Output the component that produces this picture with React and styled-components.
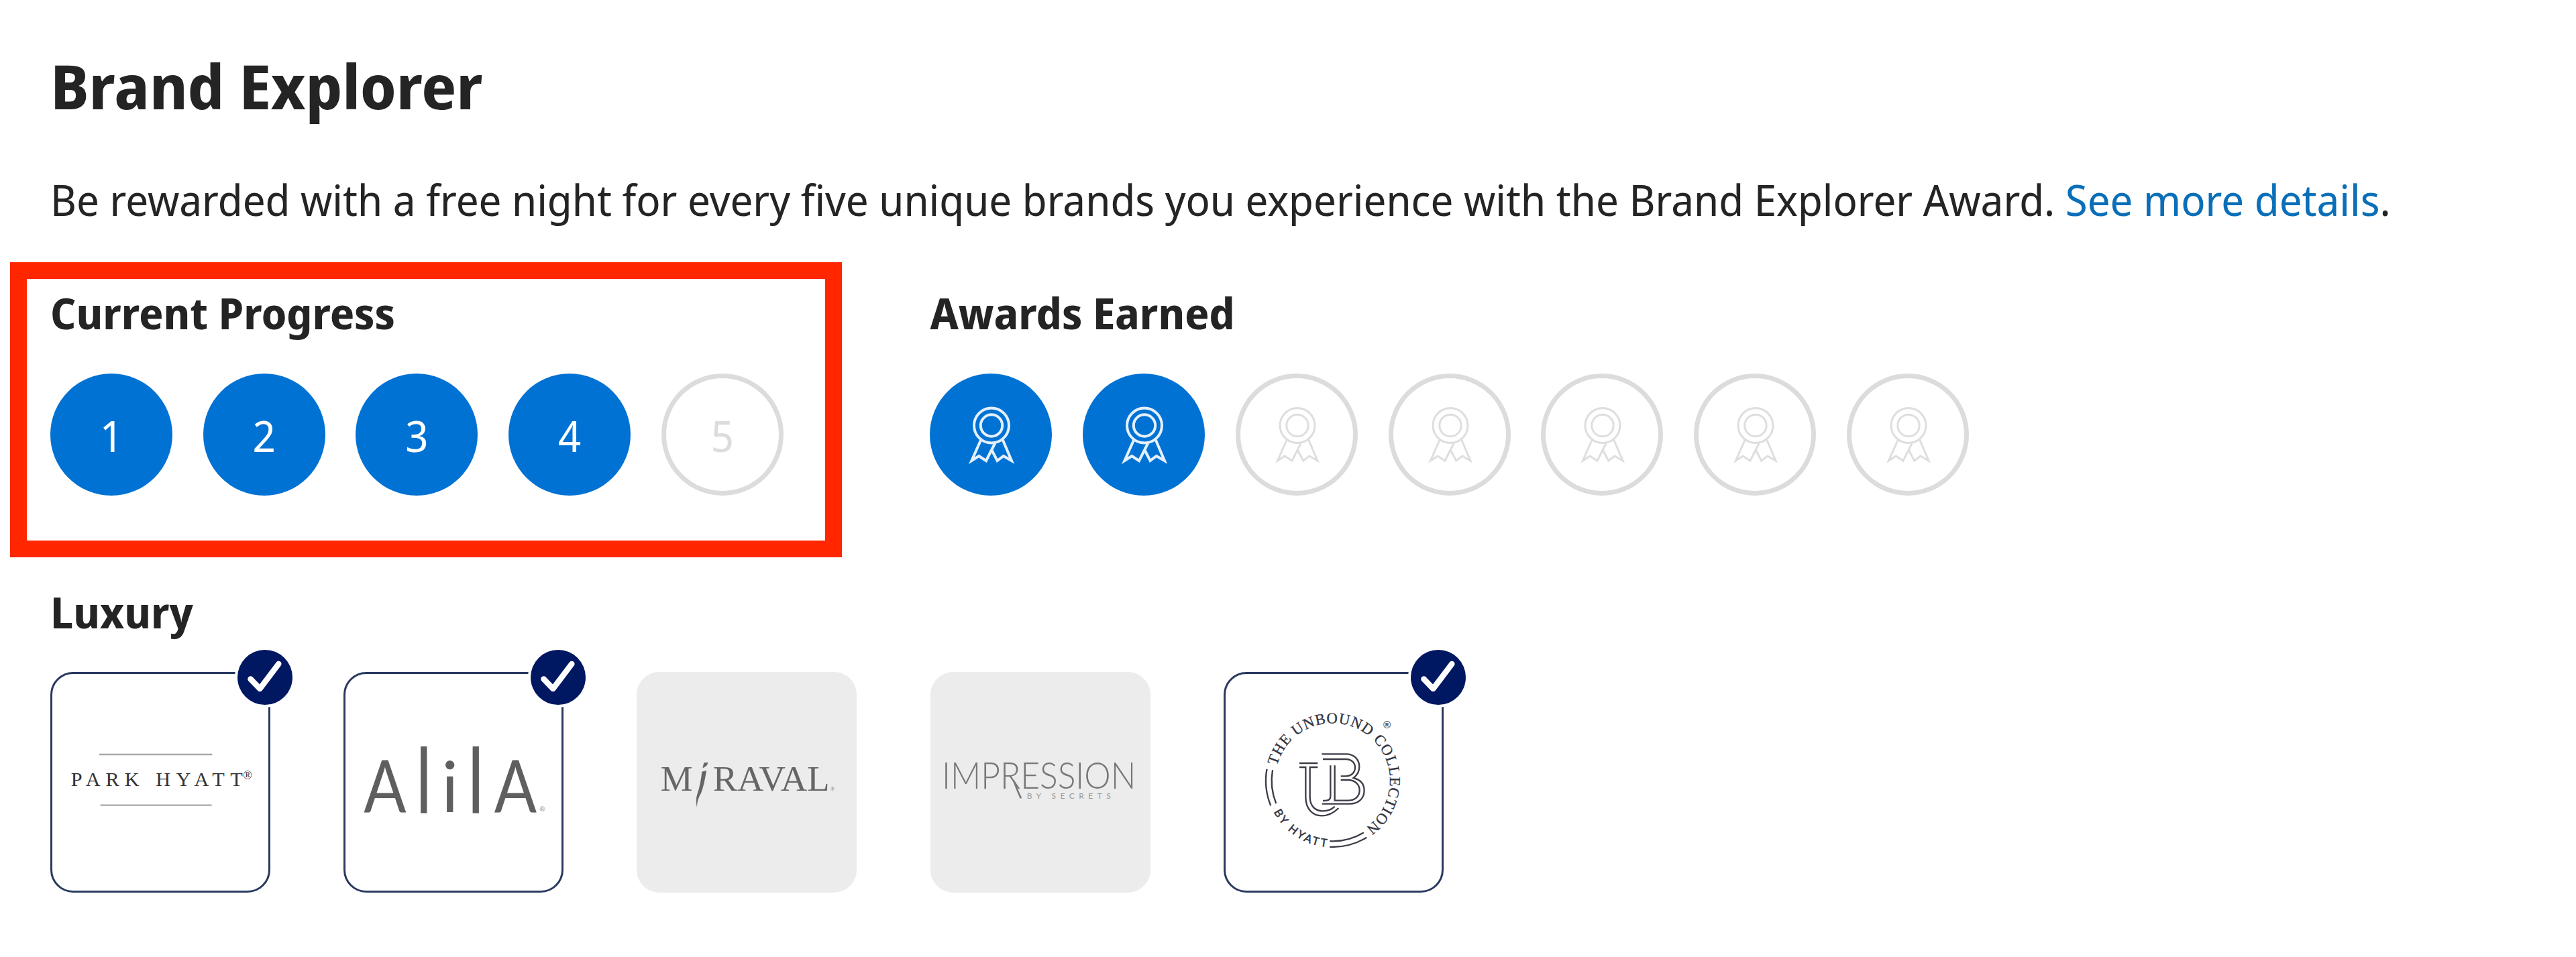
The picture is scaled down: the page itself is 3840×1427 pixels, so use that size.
import React from "react";
import styled, { createGlobalStyle, css } from "styled-components";

const Global = createGlobalStyle`
  *, *::before, *::after { box-sizing: border-box; }
  body { margin: 0; background: #fff; color: #242424; font-family: "Noto Sans Display", "Noto Sans", sans-serif; }
`;

const Page = styled.main`
  width: 3840px;
  height: 1427px;
  padding: 66px 75px 0;
  overflow: hidden;
`;

const Title = styled.h1`
  margin: 0;
  font-size: 91px;
  line-height: 124px;
  font-weight: 700;
`;

const Intro = styled.p`
  margin: 64px 0 0;
  font-size: 63.73px;
  line-height: 88px;
  white-space: nowrap;
`;

const DetailsLink = styled.a`
  color: #0a6fb8;
  text-decoration: none;
`;

const Summary = styled.div`
  display: flex;
  gap: 218.7px;
  margin-top: 80px;
`;

const Panel = styled.section`
  position: relative;
`;

const Highlight = styled.div`
  position: absolute;
  top: -31px;
  left: -60px;
  width: 1240px;
  height: 440px;
  border: 25px solid #ff2600;
  pointer-events: none;
`;

const Heading = styled.h2`
  margin: 0;
  padding-top: 1px;
  font-size: 63.7px;
  line-height: 88px;
  font-weight: 700;
`;

const Steps = styled.div`
  display: flex;
  gap: 45.7px;
  margin-top: 46px;
`;

const Step = styled.div`
  display: flex;
  align-items: center;
  justify-content: center;
  width: 182px;
  height: 182px;
  border-radius: 50%;
  font-size: 63.7px;
  line-height: 88px;
  ${({ $done }) =>
    $done
      ? css`
          background: #0072d3;
          color: #fff;
        `
      : css`
          border: 7px solid #dcdcdc;
          color: #dcdcdc;
        `}
`;

const StepNumber = styled.span`
  padding-top: 3px;
`;

const Brands = styled.section`
  margin-top: 129px;
`;

const Grid = styled.div`
  display: grid;
  grid-template-columns: repeat(5, 328px);
  column-gap: 109.2px;
  margin-top: 45px;
`;

const Card = styled.div`
  position: relative;
  height: 329px;
  border: 3px solid ${({ $earned }) => ($earned ? "#2a3a60" : "#ececec")};
  border-radius: 34px;
  background: ${({ $earned }) => ($earned ? "#fff" : "#ececec")};
`;

const Logo = styled.svg`
  display: block;
  width: 328px;
  height: 329px;
  margin: -3px;
  overflow: visible;
`;

const Badge = styled.div`
  position: absolute;
  top: -40px;
  right: -40px;
  display: flex;
  width: 90px;
  height: 90px;
  padding: 4px;
  border-radius: 50%;
  background: #fff;
`;

const Ribbon = styled.svg`
  flex: none;
  width: 182px;
  height: 182px;
  fill: none;
  stroke: ${({ $done }) => ($done ? "#e4f0fc" : "#dedede")};
  stroke-width: ${({ $done }) => ($done ? 4 : 3)};
`;

const RibbonIcon = ({ done }) => (
  <Ribbon $done={done} viewBox="0 0 182 182">
    <circle cx="92" cy="77.5" r="26" />
    <circle cx="92" cy="77.5" r="16.2" />
    <path d="M76.4 98.5L62.4 130L73.2 123L84 130L97.2 104" />
    <path d="M108.6 98.5L122 130L109.8 123L100.6 130L92.6 114.5" />
  </Ribbon>
);

const CheckBadge = () => (
  <Badge>
    <svg width="82" height="82" viewBox="-41 -41 82 82">
      <circle r="41" fill="#001762" />
      <path d="M-21.5 2.5L-7.6 17L20.3 -20" fill="none" stroke="#fff" strokeWidth="8.6" strokeLinecap="round" strokeLinejoin="round" />
    </svg>
  </Badge>
);

const ParkHyattLogo = () => (
  <Logo viewBox="106 427 984 987" fontFamily="'Liberation Serif', serif" fill="#333">
    <path d="M325 796H830M330 1023H828" stroke="#a8a8a8" strokeWidth="7" />
    <text x="198" y="936" fontSize="91" textLength="306">PARK</text>
    <text x="578" y="936" fontSize="91" textLength="388">HYATT</text>
    <text x="968" y="908" fontSize="54">®</text>
  </Logo>
);

const AlilaLogo = () => (
  <Logo viewBox="101 186 984 987" fontFamily="Lato, sans-serif" fill="#5f5f5f" textAnchor="middle">
    <text x="287" y="812" fontSize="328" textLength="190" lengthAdjust="spacingAndGlyphs">A</text>
    <text x="460" y="812" fontSize="394" fontWeight="300" stroke="#5f5f5f" strokeWidth="9">l</text>
    <text x="577" y="812" fontSize="312">i</text>
    <text x="693" y="812" fontSize="394" fontWeight="300" stroke="#5f5f5f" strokeWidth="9">l</text>
    <text x="870" y="812" fontSize="328" textLength="190" lengthAdjust="spacingAndGlyphs">A</text>
    <text x="990" y="810" fontSize="30" fill="#8a8a8a">®</text>
  </Logo>
);

const MiravalLogo = () => (
  <Logo viewBox="85 68 984 987" fontFamily="'Liberation Serif', serif" fill="#666">
    <text x="192" y="598" fontSize="161">M</text>
    <path d="M386 474L404 473Q402 490 380 498ZM377 514L397 509Q388 570 374 608Q354 640 355 674Q347 640 357 612Q372 566 377 514Z" />
    <text x="426" y="598" fontSize="161" textLength="522" lengthAdjust="spacingAndGlyphs">RAVAL</text>
    <text x="952" y="600" fontSize="24">®</text>
  </Logo>
);

const ImpressionLogo = () => (
  <Logo viewBox="79 68 984 987" fontFamily="Lato, sans-serif" fontWeight="300" fill="#777">
    <text x="130" y="590" fontSize="166" textLength="868" lengthAdjust="spacingAndGlyphs">IMPRESSION</text>
    <path d="M452 555Q468 600 484 633" fill="none" stroke="#777" strokeWidth="8" />
    <text x="510" y="636" fontSize="36" textLength="375" fontWeight="400" fill="#999">BY SECRETS</text>
  </Logo>
);

const arcPath = (radius, from, to, sweep) => {
  const at = (deg) => {
    const a = (deg * Math.PI) / 180;
    return `${588 + radius * Math.cos(a)} ${672 + radius * Math.sin(a)}`;
  };
  const span = sweep ? (to - from + 360) % 360 : (from - to + 360) % 360;
  return `M${at(from)}A${radius} ${radius} 0 ${span > 180 ? 1 : 0} ${sweep} ${at(to)}`;
};

const UnboundLogo = () => (
  <Logo viewBox="101 186 984 987" fill="#33333f">
    <defs>
      <path id="unbound-ring-top" d={arcPath(257, 195, 70, 1)} />
      <path id="unbound-ring-bottom" d={arcPath(298, 152, 80, 0)} />
    </defs>
    <text fontFamily="'Liberation Serif', serif" fontSize="68" textLength="985" stroke="#33333f" strokeWidth="1">
      <textPath href="#unbound-ring-top" textLength="985">THE UNBOUND COLLECTION</textPath>
    </text>
    <text fontFamily="Lato, sans-serif" fontSize="50" textLength="296" stroke="#33333f" strokeWidth="1.5">
      <textPath href="#unbound-ring-bottom" textLength="296">BY HYATT</textPath>
    </text>
    <text x="815" y="438" fontFamily="'Liberation Sans', sans-serif" fontWeight="700" fontSize="46" fill="#555">®</text>
    <g fill="none" stroke="#3c3c48" strokeWidth="7">
      <path d={arcPath(298, 190, 158, 0)} />
      <path d={arcPath(272, 190, 158, 0)} />
      <path d={arcPath(297, 92.5, 59, 0)} />
      <path d={arcPath(271, 92.5, 59, 0)} />
      <path d="M440 594H522M440 612H468V745C468 800 500 829 540 829C570 829 594 816 615 795" />
      <path d="M522 612H487V745C487 785 510 808 545 808C568 808 583 802 598 788" />
      <path d="M540 553H648C686 553 708 578 708 610C708 634 698 648 682 660C712 668 730 688 730 716C730 752 704 776 664 776H542" />
      <path d="M545 576H646C674 576 689 592 689 613C689 636 672 652 648 652H625" />
      <path d="M625 669H656C690 669 709 690 709 715C709 742 690 761 656 761H598V604" />
      <path d="M579 604V742C579 757 572 762 545 762" />
    </g>
  </Logo>
);

const brands = [
  { id: "park-hyatt", Mark: ParkHyattLogo, earned: true },
  { id: "alila", Mark: AlilaLogo, earned: true },
  { id: "miraval", Mark: MiravalLogo, earned: false },
  { id: "impression", Mark: ImpressionLogo, earned: false },
  { id: "unbound", Mark: UnboundLogo, earned: true },
];

export default function App() {
  return (
    <>
      <Global />
      <Page>
        <Title>Brand Explorer</Title>
        <Intro>
          Be rewarded with a free night for every five unique brands you experience with the Brand Explorer Award.{" "}
          <DetailsLink href="#">See more details</DetailsLink>.
        </Intro>
        <Summary>
          <Panel>
            <Heading>Current Progress</Heading>
            <Steps>
              {[1, 2, 3, 4, 5].map((n) => (
                <Step key={n} $done={n <= 4}>
                  <StepNumber>{n}</StepNumber>
                </Step>
              ))}
            </Steps>
            <Highlight />
          </Panel>
          <Panel>
            <Heading>Awards Earned</Heading>
            <Steps>
              {[1, 2, 3, 4, 5, 6, 7].map((n) => (
                <Step key={n} $done={n <= 2}>
                  <RibbonIcon done={n <= 2} />
                </Step>
              ))}
            </Steps>
          </Panel>
        </Summary>
        <Brands>
          <Heading>Luxury</Heading>
          <Grid>
            {brands.map(({ id, Mark, earned }) => (
              <Card key={id} $earned={earned}>
                <Mark />
                {earned && <CheckBadge />}
              </Card>
            ))}
          </Grid>
        </Brands>
      </Page>
    </>
  );
}
